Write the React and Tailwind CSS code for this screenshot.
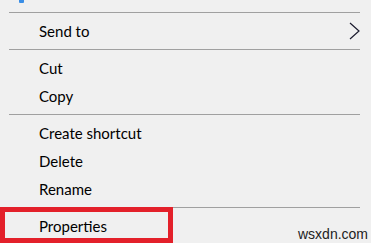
function Separator() {
  return <div className="ml-[9px] w-[351px] h-px bg-[#a0a0a0]" />;
}

function Item({ label, arrow = false }) {
  return (
    <div className="h-[28px] flex items-center pl-[39px] pr-[11px] text-[15px] text-black">
      <span className="flex-1">{label}</span>
      {arrow && (
        <svg width="11" height="18" viewBox="0 0 11 18" fill="none">
          <path d="M1 1l9 8-9 8" stroke="#1b1b2e" strokeWidth="1.2" />
        </svg>
      )}
    </div>
  );
}

function Section({ children }) {
  return <div className="py-1">{children}</div>;
}

export default function App() {
  return (
    <div
      className="relative w-[371px] h-[243px] overflow-hidden bg-[#f0f0f0]"
      style={{ fontFamily: 'Lato, "Noto Sans", sans-serif' }}
    >
      <div className="absolute left-[19px] top-0 w-[5px] h-[3px] bg-[#3a8ee6] rounded-b-[1px]" />
      <div className="h-[12px]" />
      <Separator />
      <Section>
        <Item label="Send to" arrow />
      </Section>
      <Separator />
      <Section>
        <Item label="Cut" />
        <Item label="Copy" />
      </Section>
      <Separator />
      <Section>
        <Item label="Create shortcut" />
        <Item label="Delete" />
        <Item label="Rename" />
      </Section>
      <Separator />
      <Section>
        <Item label="Properties" />
      </Section>

      {/* highlight box */}
      <div className="absolute left-0 top-[207px] w-[173px] h-[36px] border-[5px] border-[#e3202a]" />

      <div
        className="absolute left-[298px] top-[224px] text-[14px] text-[#222]"
        style={{ fontFamily: '"Liberation Sans", Arial, sans-serif' }}
      >
        wsxdn.com
      </div>
    </div>
  );
}
